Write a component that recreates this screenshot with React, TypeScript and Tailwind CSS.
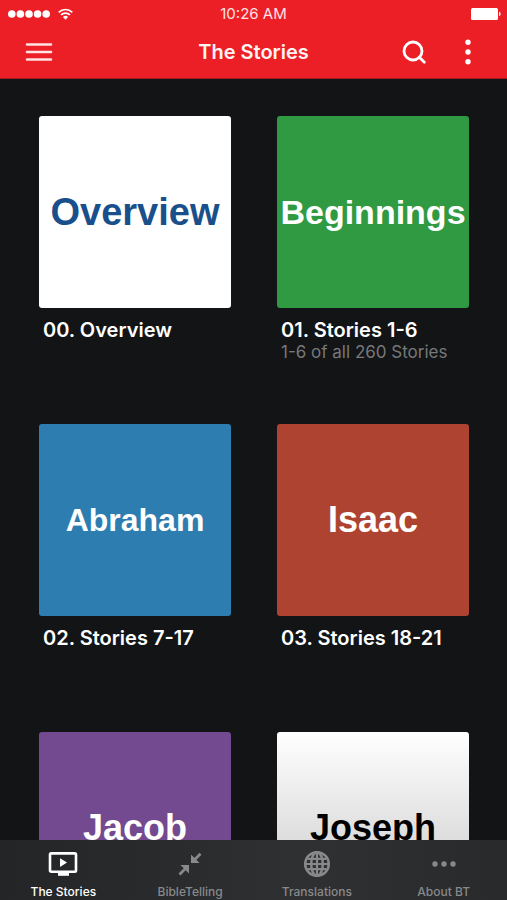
import type { ReactNode } from "react";

type Story = {
	cover: string;
	title: string;
	note?: string;
	tile: string;
};

const stories: Story[] = [
	{ cover: "Overview", title: "00. Overview", tile: "bg-white text-[#194f8b] text-[38px]" },
	{
		cover: "Beginnings",
		title: "01. Stories 1-6",
		note: "1-6 of all 260 Stories",
		tile: "bg-[#2f9a41] text-white text-[34px]",
	},
	{ cover: "Abraham", title: "02. Stories 7-17", tile: "bg-[#2e7db0] text-white text-[32px]" },
	{ cover: "Isaac", title: "03. Stories 18-21", tile: "bg-[#af4331] text-white text-[36px]" },
	{ cover: "Jacob", title: "04. Stories 22-29", tile: "bg-[#734a8f] text-white text-[36px]" },
	{
		cover: "Joseph",
		title: "05. Stories 30-38",
		tile: "bg-linear-to-b from-white to-[#c4c4c4] text-black text-[36px]",
	},
];

function StatusBar() {
	return (
		<div className="relative flex h-7 items-center justify-between pl-2 pr-1.5">
			<div className="flex items-center gap-2">
				<svg width="42" height="8" viewBox="0 0 42 8" fill="currentColor" aria-hidden="true">
					<circle cx="3.8" cy="4" r="3.8" />
					<circle cx="12.4" cy="4" r="3.8" />
					<circle cx="21" cy="4" r="3.8" />
					<circle cx="29.6" cy="4" r="3.8" />
					<circle cx="38.2" cy="4" r="3.8" />
				</svg>
				<svg width="15" height="12" viewBox="0 0 15 12" fill="none" stroke="currentColor" strokeWidth="1.7" aria-hidden="true">
					<path d="M.7 4.3a9.7 9.7 0 0 1 13.6 0" />
					<path d="M3 6.9a6.4 6.4 0 0 1 9 0" />
					<path d="M7.5 11.8 4.9 9.1a3.7 3.7 0 0 1 5.2 0z" fill="currentColor" stroke="none" />
				</svg>
			</div>
			<span className="absolute inset-x-0 text-center text-[15px] leading-5 text-red-100">10:26 AM</span>
			<svg width="30" height="12" viewBox="0 0 30 12" fill="currentColor" aria-hidden="true">
				<rect width="27" height="12" rx="1.5" />
				<path d="M28 3.8c2.2.6 2.2 3.8 0 4.4z" />
			</svg>
		</div>
	);
}

function Header() {
	return (
		<header className="shrink-0 border-b border-[#a51c20] bg-[#ec1f26] text-white">
			<StatusBar />
			<div className="grid grid-cols-[1fr_auto_1fr] items-center px-6 pb-0.5">
				<button type="button" aria-label="Menu" className="flex h-12 w-[30px] items-center justify-center text-red-100">
					<svg width="28" height="20" viewBox="0 0 28 20" fill="none" stroke="currentColor" strokeWidth="2.6" strokeLinecap="round">
						<path d="M2 2.5h24M2 10h24M2 17.5h24" />
					</svg>
				</button>
				<h1 className="text-xl font-semibold text-red-50">The Stories</h1>
				<div className="flex justify-end gap-6">
					<button type="button" aria-label="Search" className="flex h-12 w-[30px] items-center justify-center">
						<svg width="24" height="24" viewBox="0 0 24 24" fill="none" stroke="currentColor" strokeWidth="2.8" strokeLinecap="round">
							<circle cx="11" cy="11" r="9" />
							<path d="m17.3 17.3 5 5" />
						</svg>
					</button>
					<button type="button" aria-label="More" className="flex h-12 w-[30px] items-center justify-center">
						<svg width="6" height="26" viewBox="0 0 6 26" fill="currentColor">
							<circle cx="3" cy="3.2" r="2.7" />
							<circle cx="3" cy="13" r="2.7" />
							<circle cx="3" cy="22.8" r="2.7" />
						</svg>
					</button>
				</div>
			</div>
		</header>
	);
}

function StoryCard({ story }: { story: Story }) {
	return (
		<a href="#" className="block">
			<div
				className={`flex aspect-square items-center justify-center rounded-[3px] font-['Liberation_Sans',sans-serif] font-bold ${story.tile}`}
			>
				{story.cover}
			</div>
			<div className="h-[72px] pl-1 pt-2.5">
				<h2 className="whitespace-nowrap text-xl leading-6 font-semibold text-white">{story.title}</h2>
				{story.note && <p className="whitespace-nowrap text-[17px] leading-5 text-[#77787a]">{story.note}</p>}
			</div>
		</a>
	);
}

function Tab({ label, active, children }: { label: string; active?: boolean; children: ReactNode }) {
	return (
		<a
			href="#"
			aria-current={active ? "page" : undefined}
			className={`flex flex-col items-center ${active ? "text-white" : "text-[#88898b]"}`}
		>
			<span className="flex h-11 items-center pt-1">{children}</span>
			<span className="text-xs leading-4 font-medium">{label}</span>
		</a>
	);
}

function TabBar() {
	return (
		<nav className="grid h-[60px] shrink-0 grid-cols-4 bg-linear-to-r from-[#232527] via-[#2f3032] via-60% to-[#292a2c]">
			<Tab label="The Stories" active>
				<svg width="30" height="24" viewBox="0 0 30 24" fill="none" stroke="currentColor" strokeWidth="2.6">
					<rect x="2" y="1.4" width="26" height="18.4" rx="1.2" />
					<path d="M10 20h11v3.8H10z" fill="currentColor" stroke="none" />
					<path d="m12 6.2 7 4.4-7 4.4z" fill="currentColor" stroke="none" />
				</svg>
			</Tab>
			<Tab label="BibleTelling">
				<svg width="24" height="24" viewBox="0 0 24 24" fill="none" stroke="currentColor" strokeWidth="2.8">
					<path d="m22.5 1.8-6.5 6.5M1.5 22.5 8 16" />
					<path d="M13 2.4V11h8.6zM11 21.6V13H2.4z" fill="currentColor" stroke="none" />
				</svg>
			</Tab>
			<Tab label="Translations">
				<svg width="28" height="28" viewBox="0 0 28 28" fill="none" stroke="currentColor" strokeWidth="2.5">
					<circle cx="14" cy="14" r="11.8" />
					<ellipse cx="14" cy="14" rx="5.8" ry="11.8" />
					<path d="M2 14h6M20 14h6M14 2v6M14 20v6M4.5 8.8h19M4.5 19.2h19" strokeWidth="2.2" />
					<path d="M9 14h10M14 9v10" strokeWidth="2.2" />
				</svg>
			</Tab>
			<Tab label="About BT">
				<svg width="24" height="6" viewBox="0 0 24 6" fill="currentColor">
					<circle cx="3" cy="3" r="2.7" />
					<circle cx="12" cy="3" r="2.7" />
					<circle cx="21" cy="3" r="2.7" />
				</svg>
			</Tab>
		</nav>
	);
}

export default function App() {
	return (
		<div className="flex h-screen flex-col bg-[#121416] font-['Inter',sans-serif]">
			<Header />
			<main className="flex-1 overflow-y-auto pt-[37px] pr-[38px] pl-[39px] [scrollbar-width:none]">
				<div className="grid grid-cols-2 gap-x-[46px] gap-y-11">
					{stories.map((story) => (
						<StoryCard key={story.cover} story={story} />
					))}
				</div>
			</main>
			<TabBar />
		</div>
	);
}
